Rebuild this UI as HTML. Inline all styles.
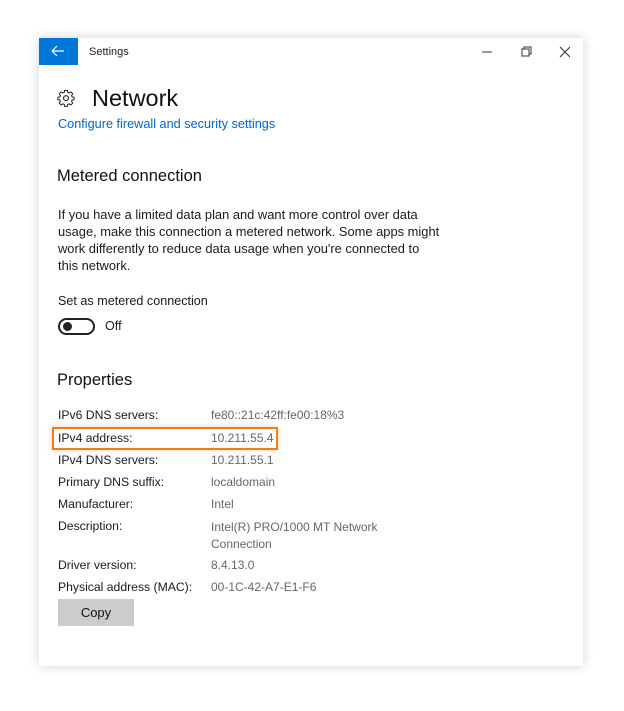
<!DOCTYPE html>
<html><head><meta charset="utf-8"><style>
*{margin:0;padding:0;box-sizing:border-box}
body{width:624px;height:711px;background:#fff;font-family:"Liberation Sans",sans-serif;position:relative;overflow:hidden;color:#000}
.win{position:absolute;left:39px;top:38px;width:544px;height:628px;background:#fff;box-shadow:0 0 10px rgba(0,0,0,0.18)}
.a{position:absolute;white-space:nowrap}
.lbl{position:absolute;left:58px;font-size:12.2px;color:#1a1a1a}
.val{position:absolute;left:211px;font-size:12px;color:#666}
</style></head><body>
<div class="win"></div>
<div class="a" style="left:39px;top:38px;width:39px;height:27px;background:#0078d7"></div>
<svg class="a" style="left:51px;top:45px" width="14" height="12" viewBox="0 0 14 12"><path d="M1 6H13M1 6L6 1M1 6L6 11" stroke="#fff" stroke-width="1.2" fill="none"/></svg>
<div class="a" style="left:89px;top:46px;font-size:11px;color:#222">Settings</div>
<svg class="a" style="left:480px;top:46px" width="90" height="12" viewBox="0 0 90 12"><path d="M2 6H12" stroke="#333" stroke-width="1"/><rect x="42" y="3" width="7" height="7" fill="none" stroke="#333"/><path d="M44 3V1H51V8H49" fill="none" stroke="#333"/><path d="M80 1L90 11M90 1L80 11" stroke="#333" stroke-width="1.1"/></svg>
<svg class="a" style="left:57px;top:89px" width="18" height="18" viewBox="0 0 24 24"><path d="M10 2h4l.6 3 2 1 2.6-1.7 2.8 2.8L20.3 9.7l.8 2 2.9.6v3.4l-2.9.6-.8 2 1.7 2.6-2.8 2.8-2.6-1.7-2 .8-.6 2.9h-4l-.6-2.9-2-.8-2.6 1.7-2.8-2.8 1.7-2.6-.8-2L0 15.7v-3.4l2.9-.6.8-2L2 7.1l2.8-2.8L7.4 6l2-1z" transform="scale(.9) translate(1.3 0)" fill="none" stroke="#222" stroke-width="1.5"/><circle cx="12" cy="12.2" r="3.3" fill="none" stroke="#222" stroke-width="1.5"/></svg>
<div class="a" style="left:92px;top:85px;font-size:23.5px;color:#111">Network</div>
<div class="a" style="left:58px;top:117px;font-size:12.7px;color:#0067c0">Configure firewall and security settings</div>
<div class="a" style="left:57px;top:167px;font-size:16.5px;color:#111">Metered connection</div>
<div class="a" style="left:58px;top:206px;font-size:12.9px;line-height:17px;color:#1a1a1a">If you have a limited data plan and want more control over data<br>usage, make this connection a metered network. Some apps might<br>work differently to reduce data usage when you're connected to<br>this network.</div>
<div class="a" style="left:58px;top:294px;font-size:12.6px;color:#1a1a1a">Set as metered connection</div>
<div class="a" style="left:58px;top:318px;width:37px;height:17px;border:2px solid #222;border-radius:9px"></div>
<div class="a" style="left:63px;top:322px;width:9px;height:9px;border-radius:50%;background:#222"></div>
<div class="a" style="left:105px;top:319px;font-size:12.6px;color:#1a1a1a">Off</div>
<div class="a" style="left:57px;top:371px;font-size:16.5px;color:#111">Properties</div>
<div class="a" style="left:52px;top:427px;width:226px;height:23px;border:2px solid #f07d1a;box-shadow:0 0 6px rgba(240,125,26,0.35)"></div>
<div class="lbl" style="top:408px">IPv6 DNS servers:</div><div class="val" style="top:408px">fe80::21c:42ff:fe00:18%3</div>
<div class="lbl" style="top:431px">IPv4 address:</div><div class="val" style="top:431px">10.211.55.4</div>
<div class="lbl" style="top:453px">IPv4 DNS servers:</div><div class="val" style="top:453px">10.211.55.1</div>
<div class="lbl" style="top:475px">Primary DNS suffix:</div><div class="val" style="top:475px">localdomain</div>
<div class="lbl" style="top:497px">Manufacturer:</div><div class="val" style="top:497px">Intel</div>
<div class="lbl" style="top:519px">Description:</div><div class="val" style="top:519px;line-height:17px">Intel(R) PRO/1000 MT Network<br>Connection</div>
<div class="lbl" style="top:558px">Driver version:</div><div class="val" style="top:558px">8.4.13.0</div>
<div class="lbl" style="top:580px">Physical address (MAC):</div><div class="val" style="top:580px">00-1C-42-A7-E1-F6</div>
<div class="a" style="left:58px;top:599px;width:76px;height:27px;background:#ccc;font-size:13px;color:#111;text-align:center;line-height:28px">Copy</div>
</body></html>
